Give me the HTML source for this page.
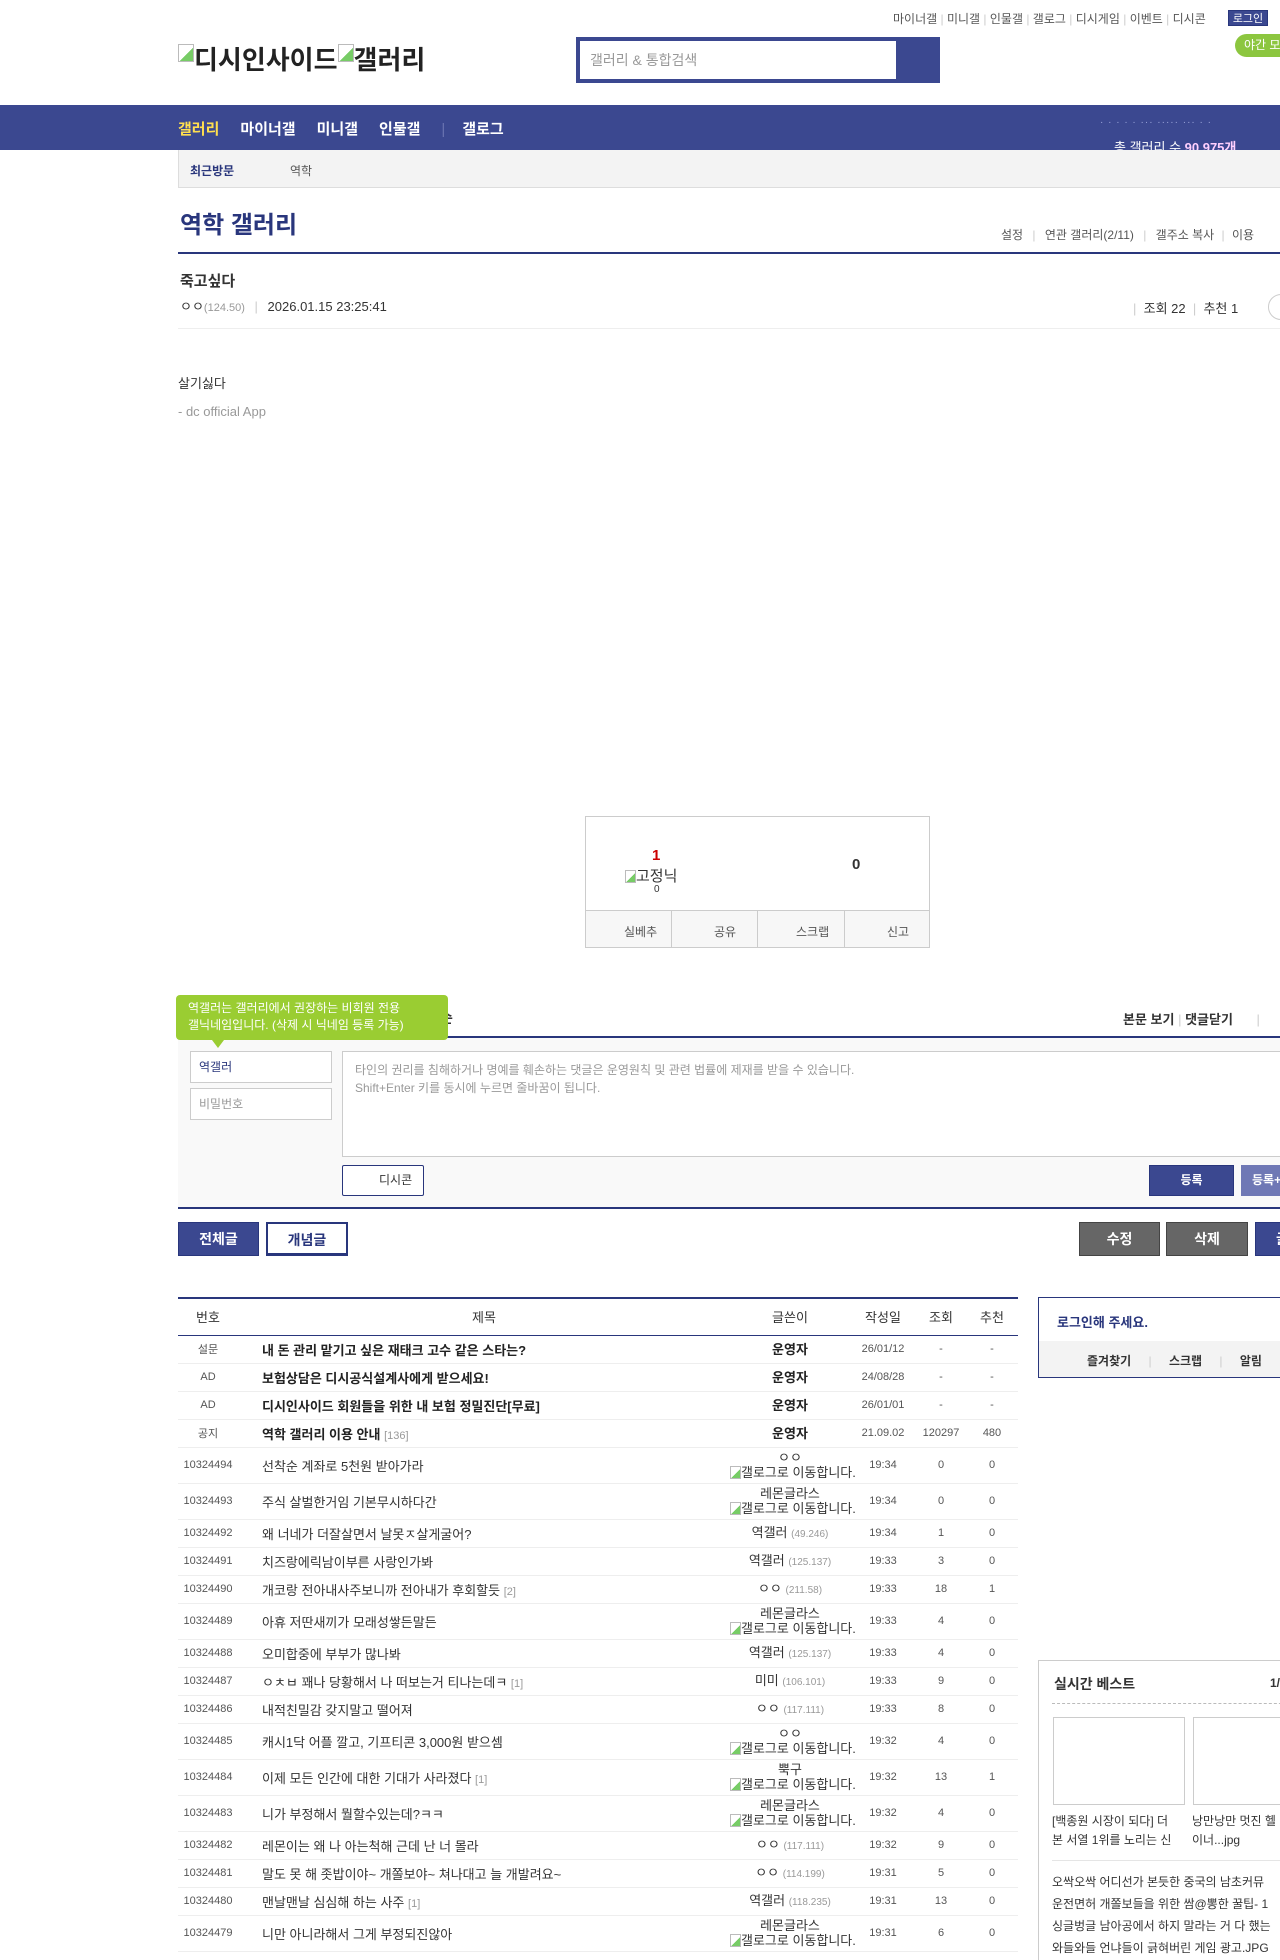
<!DOCTYPE html>
<html><head><meta charset="utf-8">
<style>
*{margin:0;padding:0;box-sizing:border-box}
html,body{width:1280px;height:1960px;overflow:hidden;background:#fff}
body{font-family:"Liberation Sans","Noto Sans CJK KR",sans-serif;color:#333;font-size:12px;position:relative}
.a{position:absolute;white-space:nowrap}
.nav span{margin-right:21px}
.bi{display:inline-block;width:16px;height:18px;border:1px solid #bbb;background:linear-gradient(135deg,#fff 55%,#7c6 56%);vertical-align:top;margin-top:4px}
.si{display:inline-block;width:11px;height:13px;border:1px solid #bbb;background:linear-gradient(135deg,#fff 55%,#7c6 56%);vertical-align:-2px}
table{border-collapse:collapse;table-layout:fixed;width:840px;position:absolute;left:178px;top:1297px;border-top:2px solid #29367c;font-size:12px}
th{height:37px;font-weight:normal;color:#333;border-bottom:1px solid #29367c;font-size:13px}
td{border-bottom:1px solid #eee;text-align:center;color:#555;font-size:11px;white-space:nowrap}
td.t{text-align:left;font-size:13px;color:#333;padding-left:24px}
td.w{font-size:13px;color:#333;line-height:15px}
td.w small{color:#999;font-size:10px}
.n td{height:28px}.n td.t,.n td.w{font-weight:bold;color:#222}
.r td{height:28px}.r2 td{height:36px}
.g{color:#999;font-size:11px}
.btn{position:absolute;height:34px;line-height:32px;text-align:center;font-size:14px;font-weight:bold;color:#fff;border:1px solid #29367c}
</style></head><body>
<!-- top links -->
<div class="a" style="left:893px;top:10px;font-size:12px;color:#555">마이너갤 <span style="color:#ccc">|</span> 미니갤 <span style="color:#ccc">|</span> 인물갤 <span style="color:#ccc">|</span> 갤로그 <span style="color:#ccc">|</span> 디시게임 <span style="color:#ccc">|</span> 이벤트 <span style="color:#ccc">|</span> 디시콘</div>
<div class="a" style="left:1228px;top:10px;width:40px;height:16px;background:#3b4890;color:#fff;font-size:11px;text-align:center;line-height:16px;border:1px solid #29367c">로그인</div>
<div class="a" style="left:1235px;top:34px;width:60px;height:23px;background:#8cc63f;border-radius:12px;color:#fff;font-size:12px;line-height:23px;padding-left:9px">야간 모드</div>
<!-- logo -->
<div class="a" style="left:178px;top:40px;font-size:26px;font-weight:bold;color:#222"><span class="bi"></span>디시인사이드<span class="bi"></span>갤러리</div>
<!-- search -->
<div class="a" style="left:576px;top:37px;width:364px;height:46px;background:#3b4890"></div>
<div class="a" style="left:580px;top:41px;width:316px;height:38px;background:#fff;font-size:14px;color:#999;line-height:38px;padding-left:10px">갤러리 &amp; 통합검색</div>
<!-- nav -->
<div class="a" style="left:0;top:105px;width:1280px;height:45px;background:#3b4890"></div>
<div class="a nav" style="left:178px;top:118px;font-size:15px;font-weight:bold;color:#fff"><span style="color:#ffdf4f">갤러리</span><span>마이너갤</span><span>미니갤</span><span>인물갤</span><span style="color:#6a74b0;font-weight:normal">|</span><span style="margin-left:-4px">갤로그</span></div>
<div class="a" style="left:1100px;top:117px;font-size:10px;color:#9aa3d8;letter-spacing:1px;height:6px;overflow:hidden">· · · · · ··· ····· ··· · ·</div>
<div class="a" style="left:1114px;top:137px;font-size:13px;color:#fff">총 갤러리 수 <b style="color:#ffd0ff">90,975개</b></div>
<!-- sub bar -->
<div class="a" style="left:178px;top:150px;width:1110px;height:38px;background:#f3f3f3;border:1px solid #ddd;border-top:none"></div>
<div class="a" style="left:190px;top:162px;font-size:12px;font-weight:bold;color:#29367c">최근방문</div>
<div class="a" style="left:290px;top:162px;font-size:12px;color:#555">역학</div>
<!-- title -->
<div class="a" style="left:180px;top:205px;font-size:24px;font-weight:bold;color:#29367c">역학 갤러리</div>
<div class="a" style="left:1001px;top:226px;font-size:12px;color:#555">설정 <span style="color:#ccc;margin:0 6px">|</span> 연관 갤러리(2/11) <span style="color:#ccc;margin:0 6px">|</span> 갤주소 복사 <span style="color:#ccc;margin:0 4px">|</span> 이용</div>
<div class="a" style="left:178px;top:252px;width:1110px;height:2px;background:#29367c"></div>
<!-- post -->
<div class="a" style="left:180px;top:270px;font-size:15px;font-weight:bold;color:#333">죽고싶다</div>
<div class="a" style="left:180px;top:296px;font-size:13px;color:#333">ㅇㅇ<span class="g">(124.50)</span> <span style="color:#ccc;margin:0 6px">|</span> 2026.01.15 23:25:41</div>
<div class="a" style="left:1133px;top:298px;font-size:13px;color:#333"><span style="color:#ccc">|</span>&nbsp; 조회 22 &nbsp;<span style="color:#ccc">|</span>&nbsp; 추천 1</div>
<div class="a" style="left:1268px;top:294px;width:26px;height:26px;border:1px solid #ccc;border-radius:13px"></div>
<div class="a" style="left:178px;top:328px;width:1110px;height:1px;background:#eee"></div>
<div class="a" style="left:178px;top:373px;font-size:13px;color:#333">살기싫다</div>
<div class="a" style="left:178px;top:404px;font-size:13px;color:#999">- dc official App</div>
<!-- recommend box -->
<div class="a" style="left:585px;top:816px;width:345px;height:132px;border:1px solid #ccc"></div>
<div class="a" style="left:585px;top:910px;width:345px;height:38px;background:#f7f7f7;border:1px solid #ccc"></div>
<div class="a" style="left:652px;top:847px;font-size:15px;font-weight:bold;color:#c00">1</div>
<div class="a" style="left:625px;top:865px;font-size:15px;color:#333"><span class="si"></span>고정닉</div>
<div class="a" style="left:654px;top:884px;font-size:10px;color:#333">0</div>
<div class="a" style="left:852px;top:856px;font-size:15px;font-weight:bold;color:#333">0</div>
<div class="a" style="left:671px;top:911px;width:1px;height:36px;background:#ccc"></div>
<div class="a" style="left:757px;top:911px;width:1px;height:36px;background:#ccc"></div>
<div class="a" style="left:844px;top:911px;width:1px;height:36px;background:#ccc"></div>
<div class="a" style="left:624px;top:923px;font-size:12px;color:#555">실베추</div>
<div class="a" style="left:714px;top:923px;font-size:12px;color:#555">공유</div>
<div class="a" style="left:796px;top:923px;font-size:12px;color:#555">스크랩</div>
<div class="a" style="left:887px;top:923px;font-size:12px;color:#555">신고</div>
<!-- comment -->
<div class="a" style="left:178px;top:1036px;width:1110px;height:2px;background:#29367c"></div>
<div class="a" style="left:440px;top:1008px;font-size:14px;font-weight:bold;color:#333">순</div>
<div class="a" style="left:1123px;top:1009px;font-size:13px;font-weight:bold;color:#333">본문 보기 <span style="color:#ccc;font-weight:normal">|</span> 댓글닫기 <span style="color:#ccc;font-weight:normal;margin-left:20px">|</span></div>
<div class="a" style="left:178px;top:1038px;width:1110px;height:170px;background:#f9f9f9"></div>
<div class="a" style="left:178px;top:1207px;width:1110px;height:2px;background:#29367c"></div>
<div class="a" style="left:176px;top:995px;width:272px;height:45px;background:#9acd32;border-radius:4px;color:#fff;font-size:12px;line-height:17px;padding:5px 0 0 12px">역갤러는 갤러리에서 권장하는 비회원 전용<br>갤닉네임입니다. (삭제 시 닉네임 등록 가능)</div>
<div class="a" style="left:212px;top:1040px;width:0;height:0;border-left:6px solid transparent;border-right:6px solid transparent;border-top:8px solid #9acd32"></div>
<div class="a" style="left:190px;top:1051px;width:142px;height:32px;background:#fff;border:1px solid #ccc;font-size:12px;color:#29367c;line-height:30px;padding-left:8px">역갤러</div>
<div class="a" style="left:190px;top:1088px;width:142px;height:32px;background:#fff;border:1px solid #ccc;font-size:12px;color:#999;line-height:30px;padding-left:8px">비밀번호</div>
<div class="a" style="left:342px;top:1051px;width:960px;height:106px;background:#fff;border:1px solid #ccc;font-size:12px;color:#999;line-height:18px;padding:9px 12px">타인의 권리를 침해하거나 명예를 훼손하는 댓글은 운영원칙 및 관련 법률에 제재를 받을 수 있습니다.<br>Shift+Enter 키를 동시에 누르면 줄바꿈이 됩니다.</div>
<div class="a" style="left:342px;top:1165px;width:82px;height:31px;background:#fff;border:1px solid #29367c;border-radius:2px;font-size:12px;color:#333;line-height:29px;padding-left:36px">디시콘</div>
<div class="btn" style="left:1149px;top:1165px;width:85px;height:31px;line-height:29px;background:#3b4890;font-size:12px">등록</div>
<div class="btn" style="left:1241px;top:1165px;width:85px;height:31px;line-height:29px;background:#6f78b5;border-color:#6f78b5;font-size:12px;text-align:left;padding-left:10px">등록+추천</div>
<!-- buttons -->
<div class="btn" style="left:178px;top:1222px;width:81px;background:#3b4890">전체글</div>
<div class="btn" style="left:266px;top:1222px;width:82px;background:#fff;color:#29367c;border:2px solid #29367c;border-bottom-width:3px">개념글</div>
<div class="btn" style="left:1079px;top:1222px;width:81px;background:#666;border-color:#444">수정</div>
<div class="btn" style="left:1166px;top:1222px;width:82px;background:#666;border-color:#444">삭제</div>
<div class="btn" style="left:1255px;top:1222px;width:82px;background:#3b4890;text-align:left;padding-left:20px">글쓰기</div>
<!-- table -->
<table>
<colgroup><col style="width:60px"><col style="width:492px"><col style="width:120px"><col style="width:66px"><col style="width:50px"><col style="width:52px"></colgroup>
<tr><th>번호</th><th>제목</th><th>글쓴이</th><th>작성일</th><th>조회</th><th>추천</th></tr>
<tr class="n"><td>설문</td><td class="t">내 돈 관리 맡기고 싶은 재태크 고수 같은 스타는?</td><td class="w">운영자</td><td>26/01/12</td><td>-</td><td>-</td></tr>
<tr class="n"><td>AD</td><td class="t">보험상담은 디시공식설계사에게 받으세요!</td><td class="w">운영자</td><td>24/08/28</td><td>-</td><td>-</td></tr>
<tr class="n"><td>AD</td><td class="t">디시인사이드 회원들을 위한 내 보험 정밀진단[무료]</td><td class="w">운영자</td><td>26/01/01</td><td>-</td><td>-</td></tr>
<tr class="n"><td>공지</td><td class="t">역학 갤러리 이용 안내 <span class="g" style="font-weight:normal">[136]</span></td><td class="w">운영자</td><td>21.09.02</td><td>120297</td><td>480</td></tr>
<tr class="r2"><td>10324494</td><td class="t">선착순 계좌로 5천원 받아가라</td><td class="w">ㅇㅇ<br><span class="si"></span>갤로그로 이동합니다.</td><td>19:34</td><td>0</td><td>0</td></tr>
<tr class="r2"><td>10324493</td><td class="t">주식 살벌한거임 기본무시하다간</td><td class="w">레몬글라스<br><span class="si"></span>갤로그로 이동합니다.</td><td>19:34</td><td>0</td><td>0</td></tr>
<tr class="r"><td>10324492</td><td class="t">왜 너네가 더잘살면서 날못ㅈ살게굴어?</td><td class="w">역갤러 <small>(49.246)</small></td><td>19:34</td><td>1</td><td>0</td></tr>
<tr class="r"><td>10324491</td><td class="t">치즈랑에릭남이부른 사랑인가봐</td><td class="w">역갤러 <small>(125.137)</small></td><td>19:33</td><td>3</td><td>0</td></tr>
<tr class="r"><td>10324490</td><td class="t">개코랑 전아내사주보니까 전아내가 후회할듯 <span class="g">[2]</span></td><td class="w">ㅇㅇ <small>(211.58)</small></td><td>19:33</td><td>18</td><td>1</td></tr>
<tr class="r2"><td>10324489</td><td class="t">아휴 저딴새끼가 모래성쌓든말든</td><td class="w">레몬글라스<br><span class="si"></span>갤로그로 이동합니다.</td><td>19:33</td><td>4</td><td>0</td></tr>
<tr class="r"><td>10324488</td><td class="t">오미합중에 부부가 많나봐</td><td class="w">역갤러 <small>(125.137)</small></td><td>19:33</td><td>4</td><td>0</td></tr>
<tr class="r"><td>10324487</td><td class="t">ㅇㅊㅂ 꽤나 당황해서 나 떠보는거 티나는데ㅋ <span class="g">[1]</span></td><td class="w">미미 <small>(106.101)</small></td><td>19:33</td><td>9</td><td>0</td></tr>
<tr class="r"><td>10324486</td><td class="t">내적친밀감 갖지말고 떨어져</td><td class="w">ㅇㅇ <small>(117.111)</small></td><td>19:33</td><td>8</td><td>0</td></tr>
<tr class="r2"><td>10324485</td><td class="t">캐시1닥 어플 깔고, 기프티콘 3,000원 받으셈</td><td class="w">ㅇㅇ<br><span class="si"></span>갤로그로 이동합니다.</td><td>19:32</td><td>4</td><td>0</td></tr>
<tr class="r2"><td>10324484</td><td class="t">이제 모든 인간에 대한 기대가 사라졌다 <span class="g">[1]</span></td><td class="w">뿍구<br><span class="si"></span>갤로그로 이동합니다.</td><td>19:32</td><td>13</td><td>1</td></tr>
<tr class="r2"><td>10324483</td><td class="t">니가 부정해서 뭘할수있는데?ㅋㅋ</td><td class="w">레몬글라스<br><span class="si"></span>갤로그로 이동합니다.</td><td>19:32</td><td>4</td><td>0</td></tr>
<tr class="r"><td>10324482</td><td class="t">레몬이는 왜 나 아는척해 근데 난 너 몰라</td><td class="w">ㅇㅇ <small>(117.111)</small></td><td>19:32</td><td>9</td><td>0</td></tr>
<tr class="r"><td>10324481</td><td class="t">말도 못 해 좃밥이야~ 개쫄보야~ 쳐나대고 늘 개발려요~</td><td class="w">ㅇㅇ <small>(114.199)</small></td><td>19:31</td><td>5</td><td>0</td></tr>
<tr class="r"><td>10324480</td><td class="t">맨날맨날 심심해 하는 사주 <span class="g">[1]</span></td><td class="w">역갤러 <small>(118.235)</small></td><td>19:31</td><td>13</td><td>0</td></tr>
<tr class="r2"><td>10324479</td><td class="t">니만 아니라해서 그게 부정되진않아</td><td class="w">레몬글라스<br><span class="si"></span>갤로그로 이동합니다.</td><td>19:31</td><td>6</td><td>0</td></tr>
</table>
<!-- sidebar -->
<div class="a" style="left:1038px;top:1297px;width:260px;height:81px;border:1px solid #29367c;background:#fff"></div>
<div class="a" style="left:1039px;top:1341px;width:259px;height:36px;background:#f3f3f3"></div>
<div class="a" style="left:1057px;top:1312px;font-size:13px;font-weight:bold;color:#29367c">로그인해 주세요.</div>
<div class="a" style="left:1087px;top:1352px;font-size:12px;font-weight:bold;color:#333">즐겨찾기 <span style="color:#ccc;font-weight:normal;margin:0 14px">|</span> 스크랩 <span style="color:#ccc;font-weight:normal;margin:0 14px">|</span> 알림</div>
<div class="a" style="left:1038px;top:1660px;width:260px;height:320px;border:1px solid #ccc;border-bottom:none"></div>
<div class="a" style="left:1054px;top:1674px;font-size:14px;font-weight:bold;color:#333">실시간 베스트</div>
<div class="a" style="left:1270px;top:1676px;font-size:12px;font-weight:bold;color:#333">1/3</div>
<div class="a" style="left:1052px;top:1703px;width:240px;border-top:1px dashed #bbb"></div>
<div class="a" style="left:1053px;top:1717px;width:132px;height:88px;border:1px solid #ccc"></div>
<div class="a" style="left:1193px;top:1717px;width:132px;height:88px;border:1px solid #ccc"></div>
<div class="a" style="left:1052px;top:1812px;font-size:12px;color:#333;line-height:19px">[백종원 시장이 되다] 더<br>본 서열 1위를 노리는 신</div>
<div class="a" style="left:1192px;top:1812px;font-size:12px;color:#333;line-height:19px">낭만낭만 멋진 헬<br>이너...jpg</div>
<div class="a" style="left:1052px;top:1860px;width:240px;height:1px;background:#e5e5e5"></div>
<div class="a" style="left:1052px;top:1871px;font-size:12px;color:#333;line-height:22px">오싹오싹 어디선가 본듯한 중국의 남초커뮤<br>운전면허 개쫄보들을 위한 쌈@뽕한 꿀팁- 1<br>싱글벙글 남아공에서 하지 말라는 거 다 했는<br>와들와들 언냐들이 긁혀버린 게임 광고.JPG</div>
</body></html>
